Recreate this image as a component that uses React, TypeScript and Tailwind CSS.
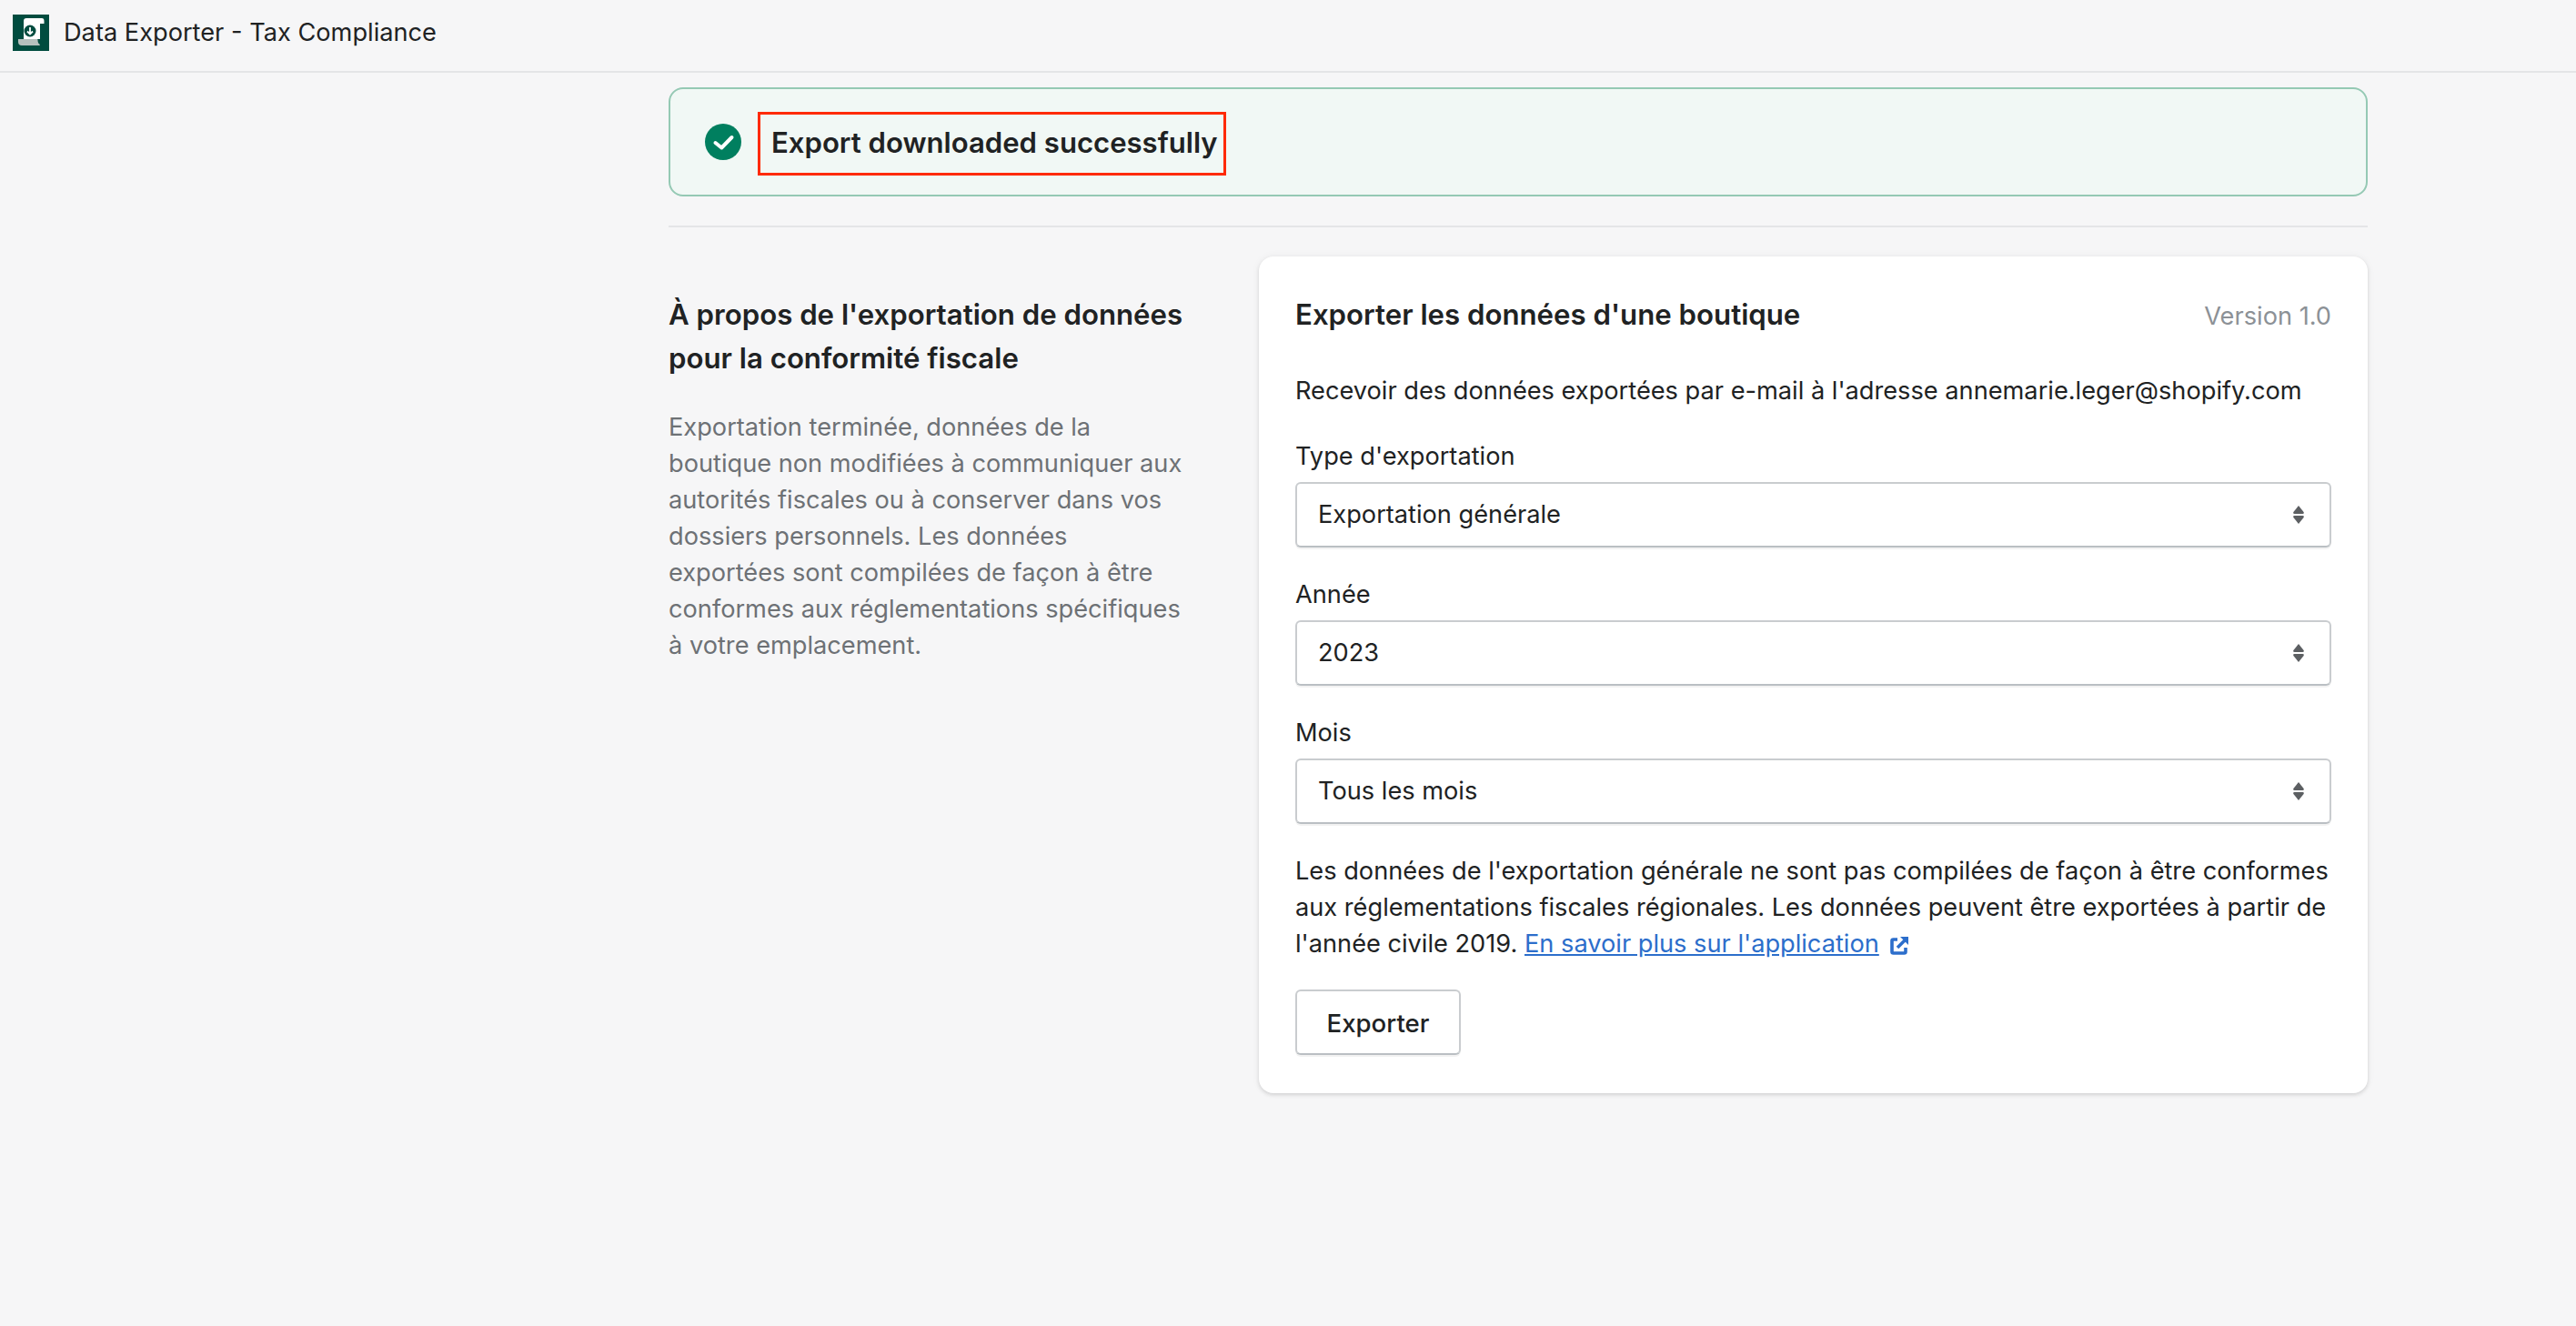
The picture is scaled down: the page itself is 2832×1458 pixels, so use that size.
const F = "font-['Inter',sans-serif]";

function SelectBox({ label, value }: { label: string; value: string }) {
  return (
    <div className="flex flex-col">
      <div className="h-[40px] mb-[8px] text-[27.2px] leading-[40px] text-[#202223]">{label}</div>
      <div className="h-[72px] flex items-center justify-between pl-[23px] pr-[28px] bg-white rounded-[6px] border-2 border-[#c9cccf] border-b-[#babfc3] shadow-[0_2px_0_rgba(0,0,0,0.05)]">
        <span className="text-[27.2px] leading-[40px] text-[#202223]">{value}</span>
        <svg width="12" height="20" viewBox="0 0 12 20" fill="#5c5f62">
          <path d="M6 0 L11.6 7 Q12.4 9 10.5 9 L1.5 9 Q-0.4 9 0.4 7 Z" />
          <path d="M6 20 L11.6 13 Q12.4 11 10.5 11 L1.5 11 Q-0.4 11 0.4 13 Z" />
        </svg>
      </div>
    </div>
  );
}

export default function App() {
  return (
    <div className={`${F} min-h-[1458px] bg-[#f6f6f7] text-[#202223] antialiased`}>
      <header className="h-[80px] flex items-center pl-[14px] pb-[6px] border-b-2 border-[#e4e5e7]">
        <svg width="40" height="40" viewBox="0 0 40 40" className="mr-[16px]">
          <rect width="40" height="40" fill="#004c3f" />
          <path d="M12 7 Q12 4 15 4 L32 4 Q34.5 4 34.5 7 L34.5 10 L30 10 L30 27 L12 27 Z" fill="#fff" />
          <path d="M6 27 L27 27 Q27.5 27 27.5 28 Q27.5 32 30 33 Q30 34 29 34 L10 34 Q6 34 6 30 Z" fill="#b5c0bd" />
          <circle cx="19" cy="18" r="6.5" fill="#004c3f" />
          <path d="M19 14 V21 M16 18.5 L19 21.5 L22 18.5" stroke="#fff" strokeWidth="1.8" fill="none" />
        </svg>
        <span className="text-[27.2px] leading-[40px] text-[#202223]">Data Exporter - Tax Compliance</span>
      </header>

      <main className="ml-[735px] w-[1868px] pt-[16px]">
        <div className="h-[120px] flex items-center pl-[38px] bg-[#f1f8f5] rounded-[16px] border-2 border-[#95c9b4]">
          <svg width="40" height="40" viewBox="0 0 40 40" className="mr-[18px]">
            <circle cx="20" cy="20" r="20" fill="#007f5f" />
            <path d="M11.5 21 L18.3 26.5 L29.5 15" stroke="#fff" strokeWidth="4" fill="none" strokeLinecap="round" strokeLinejoin="round" />
          </svg>
          <div className="h-[70px] w-[515px] mt-[4px] pb-[2px] flex items-center pl-[12px] border-[3px] border-[#ff2a00]">
            <span className="text-[31.1px] leading-[48px] font-semibold whitespace-nowrap text-[#202223]">Export downloaded successfully</span>
          </div>
        </div>

        <div className="h-[2px] bg-[#e4e5e7] mt-[32px] mb-[32px]" />

        <div className="flex items-start">
          <section className="w-[649px] pt-[40px] shrink-0">
            <h2 className="text-[31.2px] leading-[48px] font-semibold text-[#202223] w-[600px]">À propos de l'exportation de données pour la conformité fiscale</h2>
            <p className="mt-[32px] w-[568px] text-[27.2px] leading-[40px] text-[#6d7175]">Exportation terminée, données de la boutique non modifiées à communiquer aux autorités fiscales ou à conserver dans vos dossiers personnels. Les données exportées sont compilées de façon à être conformes aux réglementations spécifiques à votre emplacement.</p>
          </section>

          <section className="flex-1 bg-white rounded-[16px] shadow-[0_0_10px_rgba(23,24,24,0.05),0_2px_4px_rgba(0,0,0,0.12)] p-[40px] h-[920px]">
            <div className="flex items-center justify-between h-[48px]">
              <h2 className="text-[31.2px] leading-[48px] font-semibold text-[#202223]">Exporter les données d'une boutique</h2>
              <span className="pt-[3px] text-[27.2px] leading-[40px] text-[#8c9196]">Version 1.0</span>
            </div>
            <p className="mt-[40px] text-[27.2px] leading-[40px] text-[#202223] whitespace-nowrap">Recevoir des données exportées par e-mail à l'adresse annemarie.leger@shopify.com</p>
            <div className="mt-[32px] flex flex-col gap-[32px]">
              <SelectBox label="Type d'exportation" value="Exportation générale" />
              <SelectBox label="Année" value="2023" />
              <SelectBox label="Mois" value="Tous les mois" />
            </div>
            <p className="mt-[32px] text-[27.2px] leading-[40px] text-[#202223]">
              Les données de l'exportation générale ne sont pas compilées de façon à être conformes aux réglementations fiscales régionales. Les données peuvent être exportées à partir de l'année civile 2019.{" "}
              <a className="text-[#2c6ecb] underline">En savoir plus sur l'application</a>
              <svg width="20" height="20" viewBox="0 0 20 20" fill="none" stroke="#2c6ecb" strokeWidth="3.6" className="inline-block ml-[12px] align-[-3px]">
                <path d="M8 3 H3.5 Q2 3 2 4.5 V16.5 Q2 18 3.5 18 H15.5 Q17 18 17 16.5 V12" />
                <path d="M8 12 L17 3" />
                <path d="M11 0 H20 V9 Z" fill="#2c6ecb" stroke="none" />
              </svg>
            </p>
            <button className="mt-[30px] h-[72px] w-[182px] pt-[2px] bg-white rounded-[6px] border-2 border-[#c9cccf] border-b-[#babfc3] shadow-[0_2px_0_rgba(0,0,0,0.05)] text-[27.6px] leading-[40px] font-medium text-[#202223]">Exporter</button>
          </section>
        </div>
      </main>
    </div>
  );
}
